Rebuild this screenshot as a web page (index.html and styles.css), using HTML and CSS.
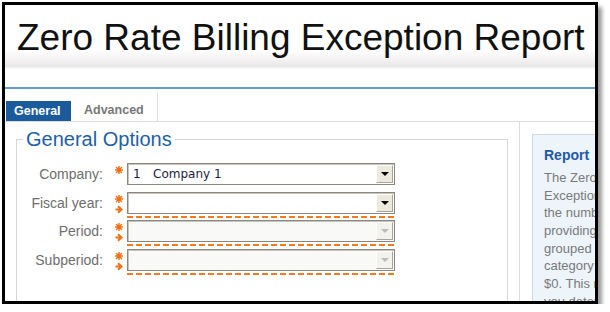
FILE: index.html
```html
<!DOCTYPE html>
<html lang="en">
<head>
    <meta charset="UTF-8">
    <link rel="stylesheet" href="styles.css">
    <title>Zero Rate Billing Exception Report</title>
</head>
<body>
    <div class="shot">
        <div class="titlebar">
            <h1>Zero Rate Billing Exception Report</h1>
        </div>

        <div class="tabs">
            <span class="tab active">General</span>
            <span class="tab plain">Advanced</span>
        </div>

        <div class="content">
            <div class="left">
                <fieldset class="options">
                    <legend>General Options</legend>

                    <div class="row">
                        <label>Company:</label>
                        <span class="marks">
                            <svg class="star" width="8" height="8" viewBox="0 0 8 8"><path d="M4 0.5V7.5M0.5 4H7.5M1.5 1.5L6.5 6.5M6.5 1.5L1.5 6.5"/></svg>
                        </span>
                        <div class="field">
                            <div class="combo">
                                <span class="num">1</span><span class="value">Company 1</span>
                                <span class="drop"><i></i></span>
                            </div>
                        </div>
                    </div>

                    <div class="row">
                        <label>Fiscal year:</label>
                        <span class="marks">
                            <svg class="star" width="8" height="8" viewBox="0 0 8 8"><path d="M4 0.5V7.5M0.5 4H7.5M1.5 1.5L6.5 6.5M6.5 1.5L1.5 6.5"/></svg>
                            <svg class="arrow" width="8" height="9" viewBox="0 0 8 9"><path d="M0.5 4.5H5M3 1.2L6.6 4.5L3 7.8"/></svg>
                        </span>
                        <div class="field">
                            <div class="combo">
                                <span class="drop"><i></i></span>
                            </div>
                            <div class="dash"></div>
                        </div>
                    </div>

                    <div class="row">
                        <label>Period:</label>
                        <span class="marks">
                            <svg class="star" width="8" height="8" viewBox="0 0 8 8"><path d="M4 0.5V7.5M0.5 4H7.5M1.5 1.5L6.5 6.5M6.5 1.5L1.5 6.5"/></svg>
                            <svg class="arrow" width="8" height="9" viewBox="0 0 8 9"><path d="M0.5 4.5H5M3 1.2L6.6 4.5L3 7.8"/></svg>
                        </span>
                        <div class="field">
                            <div class="combo off">
                                <span class="drop"><i></i></span>
                            </div>
                            <div class="dash"></div>
                        </div>
                    </div>

                    <div class="row">
                        <label>Subperiod:</label>
                        <span class="marks">
                            <svg class="star" width="8" height="8" viewBox="0 0 8 8"><path d="M4 0.5V7.5M0.5 4H7.5M1.5 1.5L6.5 6.5M6.5 1.5L1.5 6.5"/></svg>
                            <svg class="arrow" width="8" height="9" viewBox="0 0 8 9"><path d="M0.5 4.5H5M3 1.2L6.6 4.5L3 7.8"/></svg>
                        </span>
                        <div class="field">
                            <div class="combo off">
                                <span class="drop"><i></i></span>
                            </div>
                            <div class="dash"></div>
                        </div>
                    </div>
                </fieldset>
            </div>

            <div class="right">
                <div class="report">
                    <h3>Report</h3>
                    <p>
                        The Zero Rate Billing<br>
                        Exception Report lists<br>
                        the number of entries<br>
                        providing billable time<br>
                        grouped by billing<br>
                        category that was billed at<br>
                        $0. This report helps<br>
                        you determine which
                    </p>
                </div>
            </div>
        </div>
    </div>
</body>
</html>
```

FILE: styles.css
```css
body {
    margin: 0;
    background-color: #fff;
    font-family: "Liberation Sans", Arial, sans-serif;
}

.shot {
    margin: 2px 0 0 2px;
    width: 590px;
    height: 296px;
    border: 3px solid #000;
    box-shadow: 4px 5px 4px rgba(0, 0, 0, 0.4);
    background-color: #fff;
    overflow: hidden;
    display: flex;
    flex-direction: column;
}

/* title */
.titlebar {
    height: 62px;
    flex-shrink: 0;
    padding: 14px 0 0 12px;
    box-sizing: border-box;
    background: linear-gradient(to bottom, #fff 0%, #fff 72%, #f4f2f2 88%, #e9e6e6 100%);
    box-shadow: 0 1px 2px rgba(0, 0, 0, 0.08);
    margin-bottom: 20px;
}

.titlebar h1 {
    margin: 0;
    font-size: 37px;
    line-height: 37px;
    font-weight: normal;
    color: #111;
    white-space: nowrap;
}

/* tabs */
.tabs {
    flex-shrink: 0;
    display: flex;
    align-items: flex-end;
    height: 32px;
    border-top: 2px solid #6a9acb;
    border-bottom: 1px solid #dcdcdc;
}

.tab {
    font-size: 12.5px;
    font-weight: bold;
    line-height: 20px;
    height: 20px;
    box-sizing: border-box;
}

.tab.active {
    width: 65px;
    margin-left: 1px;
    padding-left: 8px;
    background-color: #1b5a9b;
    color: #fff;
}

.tab.plain {
    height: 28px;
    padding: 7px 13px 0 13px;
    color: #777;
    border-right: 1px solid #ddd;
}

/* content */
.content {
    flex: 1;
    display: flex;
    min-height: 0;
}

.left {
    width: 515px;
    flex-shrink: 0;
    border-right: 1px solid #dcdcdc;
    padding: 7px 0 0 11px;
    box-sizing: border-box;
}

.options {
    margin: 0;
    width: 492px;
    box-sizing: border-box;
    padding: 14px 0 30px 0;
    border: 1px solid #d6d6d6;
    min-width: 0;
}

.options legend {
    margin-left: 6px;
    padding: 0 3px;
    font-size: 20px;
    line-height: 20px;
    color: #1d5fa8;
}

.row {
    display: flex;
    align-items: flex-start;
    height: 28.67px;
}

.row label {
    width: 86px;
    text-align: right;
    font-size: 14px;
    line-height: 22px;
    color: #6e6e6e;
}

.marks {
    width: 24px;
    box-sizing: border-box;
    padding: 3px 0 0 12px;
    display: flex;
    flex-direction: column;
    gap: 2px;
}

.marks svg {
    display: block;
    fill: none;
    stroke: #f36f12;
}

.star {
    stroke-width: 1.5;
    stroke-linecap: round;
}

.arrow {
    stroke-width: 2;
}

.field {
    width: 268px;
}

.combo {
    height: 22px;
    box-sizing: border-box;
    border: 1px solid #8a887e;
    box-shadow: inset 1px 1px 0 #c7c4b9;
    background-color: #fff;
    display: flex;
    align-items: center;
    font-family: "DejaVu Sans", Verdana, sans-serif;
    font-size: 12px;
    color: #241d3c;
}

.combo .num {
    width: 25px;
    padding-left: 5px;
    box-sizing: border-box;
}

.drop {
    margin-left: auto;
    margin-right: 1px;
    width: 17px;
    height: 18px;
    box-sizing: border-box;
    background-color: #ece9dd;
    border: 1px solid;
    border-color: #fff #a8a598 #a8a598 #fff;
    display: flex;
    align-items: center;
    justify-content: center;
}

.drop i {
    width: 0;
    height: 0;
    border-left: 4px solid transparent;
    border-right: 4px solid transparent;
    border-top: 4px solid #000;
}

.combo.off {
    background-color: #f9f9f8;
}

.combo.off .drop {
    background-color: #f3f2ee;
}

.combo.off .drop i {
    border-top-color: #bbb;
}

.dash {
    height: 2px;
    margin-top: 2px;
    background: repeating-linear-gradient(90deg, #f47a22 0 6px, transparent 6px 9px);
}

/* report help */
.right {
    flex: 1;
    padding: 12px 0 0 12px;
    min-width: 0;
}

.report {
    width: 220px;
    height: 200px;
    border: 1px solid #c6dbed;
    background-color: #edf4fa;
    padding: 12px 0 0 11px;
    white-space: nowrap;
}

.report h3 {
    margin: 0;
    font-size: 14px;
    line-height: 17px;
    color: #1f5aa8;
}

.report p {
    margin: 5px 0 0 0;
    font-size: 13px;
    line-height: 17.67px;
    color: #7a7a7a;
}
```
